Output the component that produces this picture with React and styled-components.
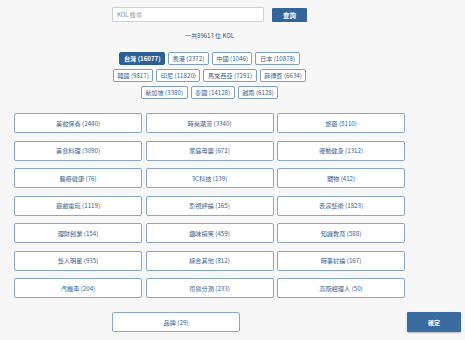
import styled, { createGlobalStyle } from "styled-components";

const GlobalStyle = createGlobalStyle`
  body {
    margin: 0;
    background: #f7f7f7;
    font-family: "Noto Sans CJK TC", "Noto Sans", sans-serif;
  }
`;

// Data
const regions = [
  ["台灣 (16077)", "香港 (2372)", "中國 (1046)", "日本 (10878)"],
  ["韓國 (9817)", "印尼 (11820)", "馬來西亞 (7291)", "菲律賓 (6634)"],
  ["新加坡 (3380)", "泰國 (14128)", "越南 (6128)"],
];

const categories = [
  "美妝保養 (2440)",
  "時尚潮流 (3340)",
  "旅遊 (5110)",
  "美食料理 (3090)",
  "家庭母嬰 (672)",
  "運動健身 (1312)",
  "醫療健康 (76)",
  "3C科技 (139)",
  "寵物 (412)",
  "遊戲電玩 (1119)",
  "影視評論 (165)",
  "表演藝術 (1823)",
  "理財創業 (154)",
  "趣味搞笑 (459)",
  "知識教育 (588)",
  "藝人明星 (935)",
  "綜合其他 (812)",
  "時事討論 (167)",
  "汽機車 (204)",
  "帶貨分潤 (233)",
  "高階經理人 (50)",
];

// Style
const Page = styled.div`
  width: 465px;
  height: 340px;
  display: flex;
  flex-direction: column;
`;

const Main = styled.div`
  width: 419px;
  box-sizing: border-box;
  padding: 7px 14px 0;
  display: flex;
  flex-direction: column;
  align-items: center;
`;

const SearchRow = styled.div`
  display: flex;
  align-items: center;
  gap: 8px;
`;

const SearchInput = styled.input`
  width: 152px;
  height: 15px;
  box-sizing: border-box;
  border: 1px solid #cfcfcf;
  border-radius: 1px;
  background: #fff;
  padding: 0 4px;
  font-family: inherit;
  font-size: 6px;
  color: #555;
  outline: none;

  &::placeholder {
    color: #8c8c8c;
  }
`;

const SearchButton = styled.button`
  width: 35px;
  height: 14px;
  border: none;
  border-radius: 1px;
  background: #33659a;
  color: #fff;
  font-family: inherit;
  font-size: 6.5px;
  font-weight: 700;
  padding: 0;
`;

const Count = styled.div`
  margin-top: 10px;
  font-size: 6px;
  line-height: 8px;
  color: #2f5c8c;
`;

const Tags = styled.div`
  margin-top: 12px;
  display: flex;
  flex-direction: column;
  align-items: center;
  gap: 4px;
`;

const TagRow = styled.div`
  display: flex;
  gap: 3px;
`;

const Tag = styled.button`
  height: 13px;
  box-sizing: border-box;
  padding: 0 3.5px;
  border: 1px solid ${(p) => (p.$active ? "#2d5f94" : "#7f9fc2")};
  border-radius: 2px;
  background: ${(p) => (p.$active ? "#2d5f94" : "#fff")};
  color: ${(p) => (p.$active ? "#fff" : "#3a628c")};
  font-family: inherit;
  font-size: 6.2px;
  font-weight: ${(p) => (p.$active ? 700 : 400)};
  white-space: nowrap;
`;

const Grid = styled.div`
  margin-top: 14px;
  width: 100%;
  display: grid;
  grid-template-columns: repeat(3, 1fr);
  column-gap: 3.5px;
  row-gap: 7.5px;
`;

const Category = styled.button`
  height: 20px;
  box-sizing: border-box;
  border: 1px solid #8aa7c7;
  border-radius: 2px;
  background: #fff;
  color: #3a628c;
  font-family: inherit;
  font-size: 6.2px;
  padding: 0;
`;

const Footer = styled.div`
  margin-top: 14px;
  display: flex;
  align-items: center;
  padding: 0 4px 0 112px;
`;

const BrandButton = styled(Category)`
  width: 128px;
`;

const ConfirmButton = styled.button`
  margin-left: auto;
  width: 54px;
  height: 20px;
  border: none;
  border-radius: 1px;
  background: #3a6c9f;
  box-shadow: 0 1px 2px rgba(0, 0, 0, 0.25);
  color: #fff;
  font-family: inherit;
  font-size: 6px;
  font-weight: 700;
  padding: 0;
`;

function App() {
  return (
    <Page>
      <GlobalStyle />
      <Main>
        {/* Search */}
        <SearchRow>
          <SearchInput placeholder="KOL 搜尋" />
          <SearchButton>查詢</SearchButton>
        </SearchRow>

        <Count>一共89613 位 KOL</Count>

        {/* Regions */}
        <Tags>
          {regions.map((row, i) => (
            <TagRow key={i}>
              {row.map((name) => (
                <Tag key={name} $active={name.startsWith("台灣")}>
                  {name}
                </Tag>
              ))}
            </TagRow>
          ))}
        </Tags>

        {/* Categories */}
        <Grid>
          {categories.map((name) => (
            <Category key={name}>{name}</Category>
          ))}
        </Grid>
      </Main>

      {/* Actions */}
      <Footer>
        <BrandButton>品牌 (29)</BrandButton>
        <ConfirmButton>確定</ConfirmButton>
      </Footer>
    </Page>
  );
}

export default App;
